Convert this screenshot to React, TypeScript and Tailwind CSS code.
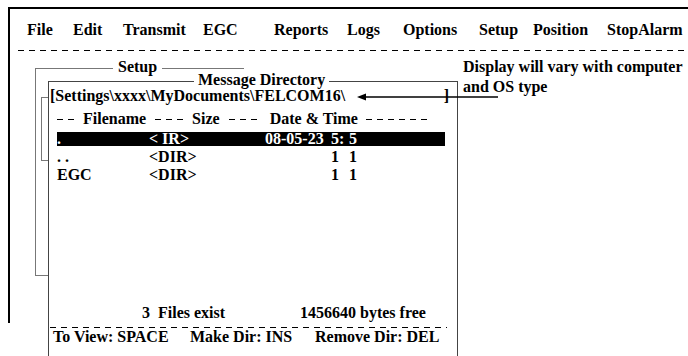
const menu: [string, string][] = [
  ["File", "w-[46px]"],
  ["Edit", "w-[50px]"],
  ["Transmit", "w-[80px]"],
  ["EGC", "w-[71px]"],
  ["Reports", "w-[73px]"],
  ["Logs", "w-[56px]"],
  ["Options", "w-[76px]"],
  ["Setup", "w-[54px]"],
  ["Position", "w-[74px]"],
  ["StopAlarm", ""],
];

const rows = [
  { name: ".", size: "< IR>", date: "08-05-23", h: "5:", m: "5", active: true },
  { name: ". .", size: "<DIR>", date: "", h: "1", m: "1", active: false },
  { name: "EGC", size: "<DIR>", date: "", h: "1", m: "1", active: false },
];

function Dashes({ n, className = "" }: { n: number; className?: string }) {
  return (
    <span className={`flex gap-[5px] ${className}`}>
      {Array.from({ length: n }).map((_, i) => (
        <span key={i} className="h-px w-[6px] bg-black" />
      ))}
    </span>
  );
}

export default function App() {
  return (
    <div className="relative h-[356px] w-[688px] overflow-hidden whitespace-nowrap bg-white font-[family-name:Liberation_Serif,serif] text-[16px] font-bold leading-[18px] text-black">
      {/* outer window frame */}
      <div className="absolute left-[8px] right-0 top-[7px] h-[316px] border-l-2 border-t-2 border-black" />

      {/* Setup window behind */}
      <div className="absolute left-[35px] top-[68px] h-[208px] w-[209px] border-b border-l border-t border-[#777]" />
      <div className="absolute left-[113px] top-[58px] bg-white px-[5px]">Setup</div>
      <div className="absolute left-[41px] top-[97px] h-[64px] w-[8px] border-b border-l border-t border-[#777]" />

      {/* menu bar */}
      <div className="mt-[21px] flex h-[18px] pl-[27px]">
        {menu.map(([label, w]) => (
          <span key={label} className={`shrink-0 ${w}`}>
            {label}
          </span>
        ))}
      </div>
      <div className="ml-[18px] mt-[11px] h-px bg-[repeating-linear-gradient(90deg,#000_0_6px,transparent_6px_11px)]" />

      <div className="flex">
        <div className="relative z-10 ml-[48px] mt-[30px] h-[275px] w-[410px] shrink-0 border-l border-r border-t border-[#444] bg-white">
          <div className="absolute -top-[11px] left-[145px] bg-white px-[4px]">Message Directory</div>

          <div className="mt-[5px] flex h-[18px] justify-between pl-[1px] pr-[8px]">
            <span>{"[Settings\\xxxx\\MyDocuments\\FELCOM16\\"}</span>
            <span>]</span>
          </div>

          <div className="mt-[5px] flex h-[18px] items-center pl-[8px]">
            <Dashes n={2} />
            <span className="ml-[9px]">Filename</span>
            <Dashes n={3} className="ml-[9px]" />
            <span className="ml-[9px]">Size</span>
            <Dashes n={3} className="ml-[9px]" />
            <span className="ml-[13px]">Date &amp; Time</span>
            <Dashes n={6} className="ml-[8px]" />
          </div>

          <div className="mt-[2px]">
            {rows.map((r) => (
              <div key={r.name} className="flex h-[18px] items-center pl-[8px]">
                <div
                  className={`flex h-[14px] w-[388px] items-center ${
                    r.active ? "bg-black text-white" : ""
                  }`}
                >
                  <span className="w-[92px] shrink-0">{r.name}</span>
                  <span className="w-[116px] shrink-0 whitespace-pre">{r.size}</span>
                  <span className="w-[66px] shrink-0">{r.date}</span>
                  <span className="w-[18px] shrink-0">{r.h}</span>
                  <span>{r.m}</span>
                </div>
              </div>
            ))}
          </div>

          <div className="mt-[120px] flex h-[18px]">
            <span className="ml-[93px] w-[158px] shrink-0 whitespace-pre">3  Files exist</span>
            <span>1456640 bytes free</span>
          </div>
          <div className="ml-[1px] mt-[5px] h-px w-[397px] bg-[repeating-linear-gradient(90deg,#000_0_6px,transparent_6px_11px)]" />
          <div className="flex h-[18px]">
            <span className="ml-[4px] w-[137px] shrink-0">To View: SPACE</span>
            <span className="w-[125px] shrink-0">Make Dir: INS</span>
            <span>Remove Dir: DEL</span>
          </div>
        </div>

        <div className="ml-[5px] mt-[6px] leading-[20px]">
          Display will vary with computer
          <br />
          and OS type
        </div>
      </div>

      {/* pointer arrow */}
      <svg className="absolute left-[355px] top-[92px] z-20" width="145" height="10" viewBox="0 0 145 10">
        <polygon points="2,5 11,1.5 11,8.5" fill="#000" />
        <line x1="10" y1="5" x2="143" y2="5" stroke="#000" strokeWidth="1.5" />
      </svg>
    </div>
  );
}
